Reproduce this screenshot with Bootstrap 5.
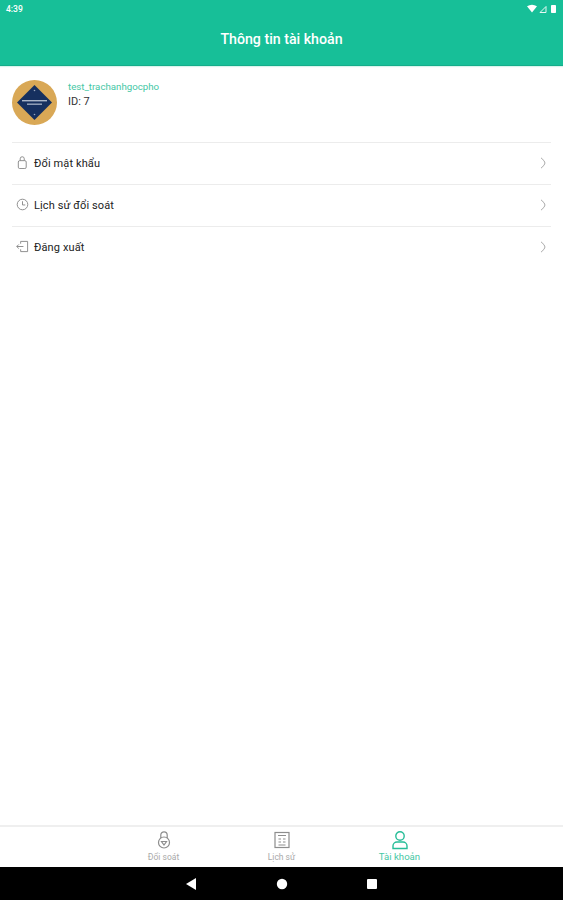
<!DOCTYPE html>
<html lang="vi">
<head>
<meta charset="utf-8">
<title>Thông tin tài khoản</title>
<link rel="stylesheet" href="https://cdn.jsdelivr.net/npm/bootstrap@5.3.0/dist/css/bootstrap.min.css">
<style>
html,body{height:100%;}
body{font-family:Roboto,"Noto Sans",sans-serif;background:#fff;color:#222;}
.screen{height:900px;width:563px;overflow:hidden;}
.head-area{background:#17bf98;height:66px;border-bottom:1px solid #14ad8a;box-shadow:0 1px 1px #d8f4ec;}
.stat-row{height:18px;padding:0 6px 0 6px;color:#fff;font-size:8.5px;font-weight:500;}
.head-title{height:43px;color:#fff;font-size:14.2px;font-weight:500;padding-top:1px;}
.profile{padding:14px 12px 0 12px;height:76px;}
.avatar{width:45px;height:45px;flex:none;margin-right:3px;}
.uname{color:#45c7a5;font-size:9.7px;line-height:12px;margin-top:1px;}
.uid{color:#333;font-size:11px;line-height:14px;margin-top:2px;}
.menu-wrap{margin:0 12px 0 12px;}
.menu-line{height:42px;border-top:1px solid #ececec;color:#222;font-size:11px;font-weight:400;letter-spacing:.12px;}
.menu-ico{width:13px;height:13px;margin:-2px 1px 0 4px;flex:none;}
.menu-text{margin-left:4px;padding-top:1px;}
.chev{width:8px;height:12px;margin-right:4px;margin-top:-1px;flex:none;}
.tabs{height:42px;border-top:2px solid #efefef;background:#fff;}
.tab-cell{width:118px;font-size:8.5px;line-height:10px;color:#a9a9a9;padding-top:3px;}
.tab-cell svg{width:20px;height:20px;display:block;margin-bottom:2px;}
.tab-on{color:#45c7a5;font-size:9.6px;}
.sys-nav{height:33px;background:#000;}
.sys-cell{width:90px;}
</style>
</head>
<body>
<div class="screen d-flex flex-column">
  <header class="head-area flex-shrink-0">
    <div class="stat-row d-flex justify-content-between align-items-center">
      <span>4:39</span>
      <svg width="30" height="10" viewBox="0 0 30 10" aria-hidden="true">
        <path d="M0 2.2Q5-.8 10 2.2L5 8.5Z" fill="#fff"/>
        <path d="M13 8.5 19 2.5V8.5Z" fill="none" stroke="#e6f8f3" stroke-width="1"/>
        <rect x="24" y="1" width="5" height="8" rx=".8" fill="#fff"/>
      </svg>
    </div>
    <div class="head-title d-flex justify-content-center align-items-center">Thông tin tài khoản</div>
  </header>

  <main class="flex-grow-1">
    <section class="profile d-flex gap-2">
      <svg class="avatar" viewBox="0 0 45 45" aria-hidden="true">
        <circle cx="22.5" cy="22.5" r="22.5" fill="#d9a856"/>
        <path d="M22.5 5 40 22.5 22.5 40 5 22.5Z" fill="#16305f"/>
        <rect x="10" y="20" width="25" height="1.4" fill="#aab6c8"/>
        <rect x="15" y="23.5" width="15" height="1.4" fill="#9ba9bf"/>
        <circle cx="22.5" cy="10.5" r=".8" fill="#9ba9bf"/>
        <circle cx="22.5" cy="34.5" r=".8" fill="#9ba9bf"/>
      </svg>
      <div>
        <div class="uname">test_trachanhgocpho</div>
        <div class="uid">ID: 7</div>
      </div>
    </section>

    <div class="menu-wrap">
      <div class="menu-line d-flex align-items-center">
        <svg class="menu-ico" viewBox="0 0 14 14" fill="none" stroke="#888" stroke-width="1" aria-hidden="true"><rect x="2.5" y="5" width="8.5" height="8.5" rx="1.5"/><path d="M4.5 5V3a2.2 2.2 0 0 1 4.4 0V5"/></svg>
        <span class="flex-grow-1 menu-text">Đổi mật khẩu</span>
        <svg class="chev" viewBox="0 0 8 12" fill="none" stroke="#aaa" stroke-width="1" aria-hidden="true"><path d="M2 .8Q6 4 6 6T2 11.2"/></svg>
      </div>
      <div class="menu-line d-flex align-items-center">
        <svg class="menu-ico" viewBox="0 0 14 14" fill="none" stroke="#888" stroke-width="1" aria-hidden="true"><circle cx="7" cy="7" r="5.7"/><path d="M7 3.5V7.5H10"/></svg>
        <span class="flex-grow-1 menu-text">Lịch sử đổi soát</span>
        <svg class="chev" viewBox="0 0 8 12" fill="none" stroke="#aaa" stroke-width="1" aria-hidden="true"><path d="M2 .8Q6 4 6 6T2 11.2"/></svg>
      </div>
      <div class="menu-line d-flex align-items-center">
        <svg class="menu-ico" viewBox="0 0 14 14" fill="none" stroke="#888" stroke-width="1" aria-hidden="true"><path d="M5 4V1.5H12.5V12.5H5V10M.8 7H8M3 4.8.8 7 3 9.2"/></svg>
        <span class="flex-grow-1 menu-text">Đăng xuất</span>
        <svg class="chev" viewBox="0 0 8 12" fill="none" stroke="#aaa" stroke-width="1" aria-hidden="true"><path d="M2 .8Q6 4 6 6T2 11.2"/></svg>
      </div>
    </div>
  </main>

  <nav class="tabs flex-shrink-0 d-flex justify-content-center">
    <div class="tab-cell d-flex flex-column align-items-center">
      <svg viewBox="0 0 20 20" fill="none" stroke="#8d8d8d" stroke-width="1.2" aria-hidden="true"><circle cx="10" cy="12.5" r="5.5"/><path d="M6.8 8V5a3.2 3.2 0 0 1 6.4 0V8M7.5 11.5H12.5L10 15Z"/></svg>
      <span>Đổi soát</span>
    </div>
    <div class="tab-cell d-flex flex-column align-items-center">
      <svg viewBox="0 0 20 20" fill="none" stroke="#8d8d8d" stroke-width="1.2" aria-hidden="true"><rect x="3" y="2.5" width="14" height="15"/><path d="M6 5.5H14M6.5 9H9M11 9H13.5M6.5 12H9M11 12H13.5M6.5 15H13.5"/></svg>
      <span>Lịch sử</span>
    </div>
    <div class="tab-cell tab-on d-flex flex-column align-items-center">
      <svg viewBox="0 0 20 20" fill="none" stroke="#27bd98" stroke-width="1.4" aria-hidden="true"><circle cx="10" cy="6" r="4.2"/><path d="M3 18.5V16a4 4 0 0 1 4-4H13a4 4 0 0 1 4 4V18.5Z"/></svg>
      <span>Tài khoản</span>
    </div>
  </nav>

  <div class="sys-nav flex-shrink-0 d-flex justify-content-center align-items-center">
    <div class="sys-cell d-flex justify-content-center"><svg width="12" height="12" viewBox="0 0 12 12" aria-hidden="true"><path d="M10 0V12L0 6Z" fill="#fff"/></svg></div>
    <div class="sys-cell d-flex justify-content-center"><svg width="12" height="12" viewBox="0 0 12 12" aria-hidden="true"><circle cx="6" cy="6" r="5.2" fill="#fff"/></svg></div>
    <div class="sys-cell d-flex justify-content-center"><svg width="12" height="12" viewBox="0 0 12 12" aria-hidden="true"><rect x="1" y="1" width="10" height="10" rx="1" fill="#fff"/></svg></div>
  </div>
</div>
<script src="https://cdn.jsdelivr.net/npm/bootstrap@5.3.0/dist/js/bootstrap.bundle.min.js"></script>
</body>
</html>
